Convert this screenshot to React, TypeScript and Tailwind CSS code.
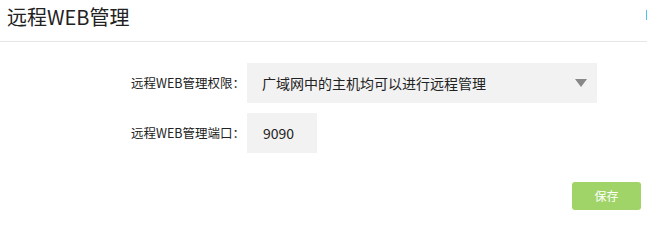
import React from "react";

export default function App() {
  const font = { fontFamily: '"Noto Sans CJK SC", "Liberation Sans", sans-serif' };
  return (
    <div className="relative w-[647px] h-[216px] bg-white text-[#333]" style={font}>
      <div className="h-[42px] border-b border-[#e6e6e6] flex items-start">
        <h1 className="pl-[7px] pt-[3px] text-[20px] leading-[28px] text-[#222]">远程WEB管理</h1>
      </div>
      <div className="absolute right-0 top-[10px] w-px h-[10px] bg-[#4ac4e8]" />
      <div className="pt-[21px] flex flex-col gap-[10px]">
        <div className="flex items-center">
          <label className="w-[245px] text-right text-[12.5px] text-[#222]">远程WEB管理权限：</label>
          <div className="ml-[2px] w-[350px] h-[40px] bg-[#f2f2f2] flex items-center justify-between pl-[15px] pr-[10px]">
            <span className="text-[14px] text-[#222]">广域网中的主机均可以进行远程管理</span>
            <svg width="12" height="8" viewBox="0 0 12 8">
              <polygon points="0,0 12,0 6,8" fill="#888" />
            </svg>
          </div>
        </div>
        <div className="flex items-center">
          <label className="w-[245px] text-right text-[12.5px] text-[#222]">远程WEB管理端口：</label>
          <div className="ml-[2px] w-[70px] h-[40px] bg-[#f2f2f2] flex items-center pl-[16px]">
            <span className="text-[14px] text-[#222]">9090</span>
          </div>
        </div>
      </div>
      <div className="flex justify-end pr-[6px] pt-[29px]">
        <button className="w-[69px] h-[28px] rounded-[3px] bg-[#a0d468] text-white text-[12px]">保存</button>
      </div>
    </div>
  );
}
